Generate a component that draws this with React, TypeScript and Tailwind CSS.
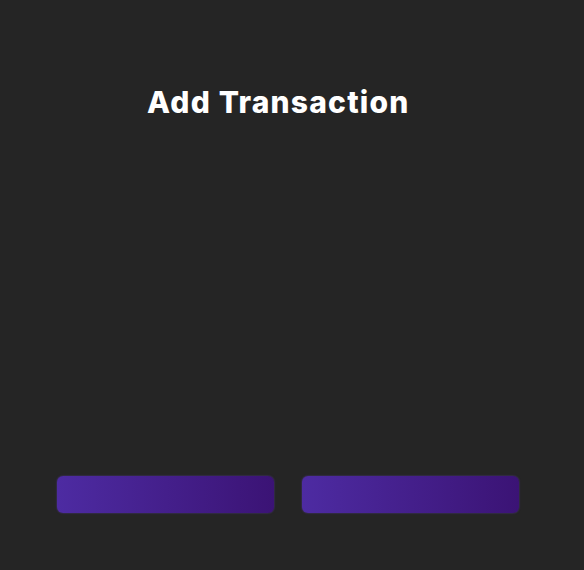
export default function App() {
  return (
    <main
      className="min-h-[570px] w-full bg-[#252525] text-white"
      style={{ fontFamily: "Inter, 'Noto Sans', sans-serif" }}
    >
      {/* Header */}
      <div className="pt-[84px] pl-[147px]">
        <h1 className="text-[30px] font-extrabold leading-[36px] tracking-[1.2px]">
          Add Transaction
        </h1>
      </div>

      {/* Actions */}
      <div className="mt-[356px] ml-[57px] flex gap-[28px]">
        <button className="h-[37px] w-[217px] rounded-[6px] bg-gradient-to-r from-[#4d2ba2] to-[#3b1375] shadow-[0_0_2px_rgba(110,70,210,0.6)]" />
        <button className="h-[37px] w-[217px] rounded-[6px] bg-gradient-to-r from-[#4d2ba2] to-[#3b1375] shadow-[0_0_2px_rgba(110,70,210,0.6)]" />
      </div>
    </main>
  );
}
